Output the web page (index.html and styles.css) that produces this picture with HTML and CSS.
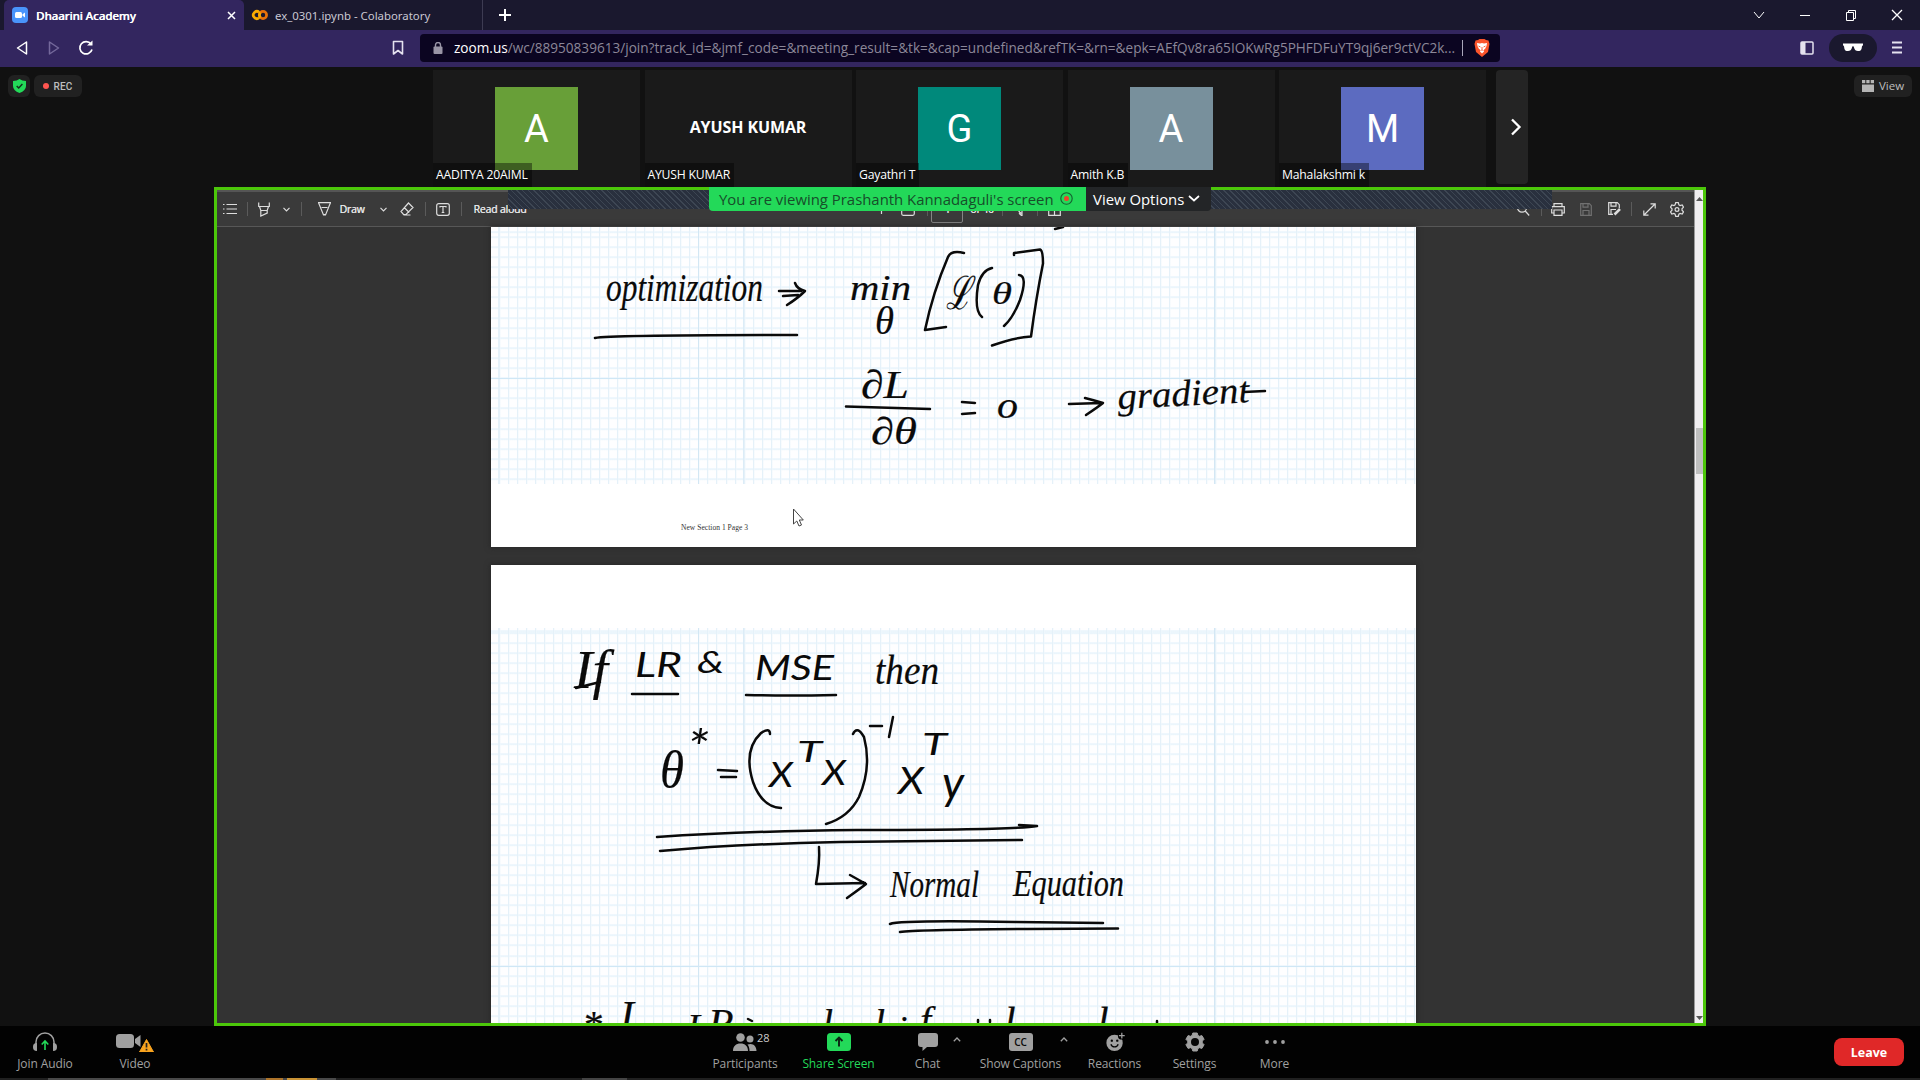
FILE: index.html
```html
<!DOCTYPE html>
<html lang="en">
<head>
<meta charset="utf-8">
<title>Dhaarini Academy</title>
<link rel="stylesheet" href="styles.css">
</head>
<body>
<div class="window">
  <header class="tabs">
    <div class="tab tab-active">
      <svg width="16" height="16" viewBox="0 0 16 16"><rect width="16" height="16" rx="4" fill="#4a94fb"/><rect x="3" y="5" width="7" height="6" rx="1.500" fill="#fff"/><path d="M10.500 7.300 13 5.400v5.200l-2.500-1.900z" fill="#fff"/></svg>
      <span class="tab-title">Dhaarini Academy</span>
      <svg width="9" height="9" viewBox="0 0 9 9"><path d="M1 1l7 7M8 1L1 8" stroke="#fff" stroke-width="1.500"/></svg>
    </div>
    <div class="tab tab-idle">
      <svg width="17" height="12" viewBox="0 0 17 12" fill="none" stroke-width="2.700"><path d="M8.200 3.200A3.600 3.600 0 1 0 8.200 8.800" stroke="#f9ab00"/><circle cx="12" cy="6" r="3.600" stroke="#e8710a"/><path d="M9.500 8.600A3.600 3.600 0 0 1 9.500 3.400" stroke="#f9ab00"/></svg>
      <span class="tab-title">ex_0301.ipynb - Colaboratory</span>
    </div>
    <svg class="new-tab" width="12" height="12" viewBox="0 0 12 12"><path d="M6 0v12M0 6h12" stroke="#fff" stroke-width="2"/></svg>
    <div class="win-buttons">
      <svg width="12" height="12" viewBox="0 0 12 12"><path d="M1 3l5 6 5-6"/></svg>
      <svg width="12" height="12" viewBox="0 0 12 12"><path d="M1 6.500h10"/></svg>
      <svg width="12" height="12" viewBox="0 0 12 12"><path d="M1.500 3.500h7v8h-7zM3.500 3.500v-2h7v8h-2"/></svg>
      <svg width="12" height="12" viewBox="0 0 12 12"><path d="M1 1l10 10M11 1L1 11" stroke-width="1.300"/></svg>
    </div>
  </header>

  <nav class="toolbar">
    <svg width="12" height="16" viewBox="0 0 12 16"><path d="M10.500 2v12L1.500 8z" fill="none" stroke="#fff" stroke-width="1.500" stroke-linejoin="round"/></svg>
    <svg width="12" height="16" viewBox="0 0 12 16"><path d="M1.500 2v12l9-6z" fill="none" stroke="#74689b" stroke-width="1.500" stroke-linejoin="round"/></svg>
    <svg width="16" height="16" viewBox="0 0 16 16"><path d="M13 4A6.200 6.200 0 1 0 14 9.500" fill="none" stroke="#fff" stroke-width="1.700"/><path d="M9 5.500h5.500V.500z" fill="#fff"/></svg>
    <svg width="12" height="16" viewBox="0 0 12 16"><path d="M1.500 1.500h9v12.500L6 10.500 1.500 14z" fill="none" stroke="#e5e2ef" stroke-width="1.600" stroke-linejoin="round"/></svg>
    <div class="address">
      <svg width="10" height="12" viewBox="0 0 10 12"><rect x=".500" y="4.500" width="9" height="7.500" rx="1" fill="#9995a6"/><path d="M2.500 5V3a2.500 2.500 0 0 1 5 0v2" fill="none" stroke="#9995a6" stroke-width="1.400"/></svg>
      <span class="url"><b>zoom.us</b>/wc/88950839613/join?track_id=&amp;jmf_code=&amp;meeting_result=&amp;tk=&amp;cap=undefined&amp;refTK=&amp;rn=&amp;epk=AEfQv8ra65IOKwRg5PHFDFuYT9qj6er9ctVC2k...</span>
      <i class="address-rule"></i>
      <svg width="16" height="18" viewBox="0 0 16 18"><path d="M4 1l1.500-1h5L12 1l2.500.500L15.500 5l-1.500 8-6 5-6-5L.500 5l1-3.500z" fill="#fb542b"/><path d="M3 4l3 .500L8 4l2 .500L13 4l-.500 3-1.500 3-1 .500 0 2L8 14.500l-2-2 0-2L5 10 3.500 7z" fill="#fff"/><path d="M4.500 7l2 1M11.500 7l-2 1M8 8v2.500M6.500 11.500L8 10.800l1.500.700" stroke="#fb542b" stroke-width=".900" fill="none"/></svg>
    </div>
    <div class="tools">
      <svg width="14" height="14" viewBox="0 0 14 14"><rect x="1" y="1" width="12" height="12" rx="1" fill="none" stroke="#e5e2ef" stroke-width="1.500"/><path d="M1 1h4.500v12H1z" fill="#e5e2ef"/></svg>
      <span class="private"><svg width="20" height="9" viewBox="0 0 20 9"><path d="M0 .500h20v2c-.800 0-1 .500-1.200 2C18.500 7.500 17 8 15 8s-3.500-1-4-3.500c-.300-1-.500-1.200-1-1.200s-.700.200-1 1.200C8.500 7 7 8 5 8S1.500 7.500 1.200 4.500C1 3 .800 2.500 0 2.500z" fill="#fff"/></svg></span>
      <svg width="10" height="13" viewBox="0 0 10 13"><path d="M0 1.500h10M0 6.500h10M0 11.500h10" stroke="#e5e2ef" stroke-width="1.800"/></svg>
    </div>
  </nav>

  <main class="meeting">
    <div class="status">
      <span class="chip chip-shield"><svg width="13" height="14" viewBox="0 0 13 14"><path d="M6.500 0Q9 2 13 2v5q0 4.500-6.500 7Q0 11.500 0 7V2q4 0 6.500-2z" fill="#23d959"/><path d="M3.700 7l2 2 3.700-4" fill="none" stroke="#152a1b" stroke-width="1.400"/></svg></span>
      <span class="chip chip-rec"><i class="rec-dot"></i>REC</span>
    </div>
    <section class="gallery">
      <article class="tile"><div class="avatar avatar-lime">A</div><span class="name">AADITYA 20AIML</span></article>
      <article class="tile"><strong class="big-name">AYUSH KUMAR</strong><span class="name">AYUSH KUMAR</span></article>
      <article class="tile"><div class="avatar avatar-teal">G</div><span class="name">Gayathri T</span></article>
      <article class="tile"><div class="avatar avatar-slate">A</div><span class="name">Amith K.B</span></article>
      <article class="tile"><div class="avatar avatar-indigo">M</div><span class="name">Mahalakshmi k</span></article>
      <div class="next"><svg width="12" height="18" viewBox="0 0 12 18"><path d="M2 1.500l7.500 7.500L2 16.500" fill="none" stroke="#fff" stroke-width="2.300"/></svg></div>
    </section>
    <div class="view-wrap"><span class="chip chip-view"><svg width="12" height="12" viewBox="0 0 12 12" fill="#b5b5b5"><path d="M0 4.500h12V12H0zM0 0h3.300v3.300H0zM4.300 0h3.300v3.300H4.300zM8.700 0H12v3.300H8.700z"/></svg>View</span></div>
  </main>

  <section class="share">
    <div class="viewer">
      <div class="pdf-bar">
        <svg width="14" height="12" viewBox="0 0 14 12"><path d="M3.500 1.500H14M3.500 6H14M3.500 10.500H14M0 1.500h1.500M0 6h1.500M0 10.500h1.500"/></svg>
        <i class="rule"></i>
        <svg width="12" height="15" viewBox="0 0 12 15"><path d="M.700.500v4h10.600v-4M1.500 4.500l1.300 4h6.400l1.300-4M2.800 8.500V14l6.400-3V8.500"/></svg>
        <svg width="7" height="5" viewBox="0 0 7 5"><path d="M.500.800l3 3 3-3"/></svg>
        <i class="rule"></i>
        <svg width="13" height="14" viewBox="0 0 13 14"><path d="M.500.700h12L7.500 13h-2zM3.500 5.500h6M5.200 12.500h2.600"/></svg>
        <span>Draw</span>
        <svg width="7" height="5" viewBox="0 0 7 5"><path d="M.500.800l3 3 3-3"/></svg>
        <svg width="14" height="14" viewBox="0 0 14 14"><path d="M8.500 1L13 5.500 6 12.500H3.500L1 9.500zM4.200 5.500l5 5M3.500 13h7"/></svg>
        <i class="rule"></i>
        <svg width="14" height="13" viewBox="0 0 14 13"><rect x=".700" y=".700" width="12.600" height="11.600" rx="2"/><path d="M4 4.500v-1h6v1M7 3.500v6M5.700 9.500h2.600"/></svg>
        <i class="rule"></i>
        <span>Read aloud</span>
        <i></i>
        <svg width="9" height="9" viewBox="0 0 9 9"><path d="M4.500 0v9M0 4.500h9"/></svg>
        <svg width="14" height="13" viewBox="0 0 14 13"><rect x=".700" y=".700" width="12.600" height="11.600" rx="1.500"/></svg>
        <i class="rule"></i>
        <span class="page-box">4</span>
        <span>of 40</span>
        <i class="rule"></i>
        <i></i>
        <svg width="12" height="13" viewBox="0 0 12 13"><path d="M10.500 5A4.500 4.500 0 1 0 5 10.500M5 7.500v5.500L2 10.300"/></svg>
        <i class="rule"></i>
        <svg width="13" height="13" viewBox="0 0 13 13"><path d="M.700.700h11.600v11.600H.700zM6.500.700v11.600M6.500 6h5.800"/></svg>
        <i></i>
        <svg width="14" height="14" viewBox="0 0 14 14"><circle cx="6" cy="5.500" r="4.600"/><path d="M9.200 9l4 4.500"/></svg>
        <i class="rule"></i>
        <svg width="14" height="13" viewBox="0 0 14 13"><path d="M3 3.500v-2.800h8v2.800M3 10H.700V3.700h12.600V10H11M3 7h8v5.300H3z"/></svg>
        <svg class="dim" width="12" height="13" viewBox="0 0 12 13"><path d="M.700.700h8.600l2 2v9.600H.700zM3 .700v3.500h5V.700M3 12V7.500h6V12"/></svg>
        <svg width="13" height="14" viewBox="0 0 13 14"><path d="M5 12.300H.700V.700h8.600l2 2V6M3 .700v3.500h5V.700M3 12V7.500h5"/><path d="M6.500 12.500l5.500-5.500" stroke-width="2.500"/></svg>
        <i class="rule"></i>
        <svg width="13" height="13" viewBox="0 0 13 13"><path d="M1 12L12 1M7.500.800h4.700v4.700M.800 7.500v4.700h4.700"/></svg>
        <svg width="14" height="15" viewBox="0 0 14 15"><path d="M5.700.700h2.600l.600 2.100 1.200.700 2.100-.600 1.300 2.300-1.500 1.600v1.400l1.500 1.600-1.300 2.300-2.100-.600-1.200.700-.600 2.100H5.700l-.600-2.100-1.200-.700-2.100.600L.500 9.800 2 8.200V6.800L.500 5.200l1.300-2.300 2.100.600 1.200-.700z"/><circle cx="7" cy="7.500" r="1.900"/></svg>
      </div>

      <div class="pages">
        <div class="page page-three">
          <div class="squares"></div>
          <svg class="ink" width="925" height="320" viewBox="491 227 925 320">
            <g class="pen">
              <path d="M1055 229l8-2"/>
              <path d="M595 338q15-3 202-3"/>
              <path d="M779 291h22M783 296l15-1M795 283q2 6 10 8-7 7-18 14"/>
              <path d="M964 253q-13-3-16 4-15 35-23 73l21-3"/>
              <path d="M1014 255v-2l26-3.500q3 1 3 14-7 35-12 73-17 1-39 9"/>
              <path d="M992 268q-10 2-14 17-4 26 4 32M1019 275q9 1 1 25-7 18-16 26"/>
              <path d="M846 406.500l84 2.500"/>
              <path d="M962 402l13 1M962 414l13-1"/>
              <path d="M1069 404l32-1M1085 398q8 2 18 5-5 4-17 12"/>
              <path d="M1244 392l21-1"/>
            </g>
            <g class="script">
              <text x="606" y="301" font-size="39" textLength="157" lengthAdjust="spacingAndGlyphs">optimization</text>
              <text x="850" y="300" font-size="35" textLength="61" lengthAdjust="spacingAndGlyphs">min</text>
              <text x="875" y="334" font-size="39" textLength="19" lengthAdjust="spacingAndGlyphs">θ</text>
              <text x="946" y="309" font-size="46" textLength="25" lengthAdjust="spacingAndGlyphs">ℒ</text>
              <text x="992" y="304" font-size="32" textLength="20" lengthAdjust="spacingAndGlyphs">θ</text>
              <text x="861" y="398" font-size="40" textLength="48" lengthAdjust="spacingAndGlyphs">∂L</text>
              <text x="871" y="444" font-size="38" textLength="46" lengthAdjust="spacingAndGlyphs">∂θ</text>
              <text x="997" y="418" font-size="38" textLength="21" lengthAdjust="spacingAndGlyphs">o</text>
              <text x="1118" y="409" font-size="37" textLength="132" lengthAdjust="spacingAndGlyphs" transform="rotate(-3 1118 409)">gradient</text>
            </g>
            <text class="footer" x="681" y="530" textLength="67">New Section 1 Page 3</text>
            <path class="pointer" d="M793.500 509v15l3.300-3 2.200 5 2.500-1-2.200-5h4z"/>
          </svg>
        </div>
        <div class="page page-four">
          <div class="squares"></div>
          <svg class="ink" width="925" height="458" viewBox="491 565 925 458">
            <g class="pen">
              <path d="M576 688l24-6"/>
              <path d="M632 694h46M746 695q40 1 90 0"/>
              <path d="M718 770l19 1M721 777h15"/>
              <path d="M770 734q0-7-9-1-18 17-8 49 9 25 28 26"/>
              <path d="M853 734q4-9 11 3 8 30-5 60-10 20-33 27"/>
              <path d="M870 726h12M893 717l-4 20"/>
              <path d="M657 837q90-6 200-7 160 0 180-4l-18-1"/>
              <path d="M660 851q80-7 180-9l182-2"/>
              <path d="M819 847q1 15-3 37l49-1M850 875l16 9q-5 4-19 14"/>
              <path d="M890 924q10-4 125-2l88 1M900 932q20-3 218-3.500"/>
            </g>
            <g class="script">
              <text x="574" y="688" font-size="54" textLength="34" lengthAdjust="spacingAndGlyphs">If</text>
              <text x="875" y="684" font-size="42" textLength="64" lengthAdjust="spacingAndGlyphs">then</text>
              <text x="660" y="787" font-size="52" textLength="24" lengthAdjust="spacingAndGlyphs">θ</text>
              <text x="1013" y="896" font-size="38" textLength="111" lengthAdjust="spacingAndGlyphs">Equation</text>
              <text x="890" y="897" font-size="37" textLength="89" lengthAdjust="spacingAndGlyphs">Normal</text>
            </g>
            <g class="print">
              <text x="635" y="677" font-size="34" textLength="47" lengthAdjust="spacingAndGlyphs">LR</text>
              <text x="697" y="673" font-size="31" textLength="27" lengthAdjust="spacingAndGlyphs">&amp;</text>
              <text x="755" y="680" font-size="35" textLength="79" lengthAdjust="spacingAndGlyphs">MSE</text>
              <text x="687" y="766" font-size="50" textLength="22" lengthAdjust="spacingAndGlyphs">*</text>
              <text x="769" y="787" font-size="35" textLength="24" lengthAdjust="spacingAndGlyphs">X</text>
              <text x="797" y="762" font-size="29" textLength="25" lengthAdjust="spacingAndGlyphs">T</text>
              <text x="822" y="785" font-size="35" textLength="24" lengthAdjust="spacingAndGlyphs">X</text>
              <text x="922" y="755" font-size="30" textLength="25" lengthAdjust="spacingAndGlyphs">T</text>
              <text x="898" y="794" font-size="36" textLength="26" lengthAdjust="spacingAndGlyphs">X</text>
              <text x="942" y="799" font-size="46" textLength="22" lengthAdjust="spacingAndGlyphs">y</text>
            </g>
            <g class="script">
              <text x="582" y="1038" font-size="40">*</text>
              <text x="620" y="1030" font-size="42">I</text>
              <text x="687" y="1040" font-size="38">L</text>
              <text x="708" y="1038" font-size="42">R</text>
              <text x="822" y="1037" font-size="40">l</text>
              <text x="874" y="1037" font-size="40">l</text>
              <text x="897" y="1042" font-size="38">i</text>
              <text x="920" y="1034" font-size="40">f</text>
              <text x="1004" y="1036" font-size="42">l</text>
              <text x="1097" y="1036" font-size="42">l</text>
            </g>
            <g class="pen"><path d="M748 1019l4 2M978 1020v2M990 1020v2M1157 1021v2"/></g>
          </svg>
        </div>
      </div>
    </div>
    <div class="scroll">
      <svg width="7" height="4" viewBox="0 0 7 4"><path d="M0 4l3.500-4L7 4z" fill="#555"/></svg>
      <i class="thumb"></i>
      <svg width="7" height="4" viewBox="0 0 7 4"><path d="M0 0l3.500 4L7 0z" fill="#555"/></svg>
    </div>
    <div class="hatch"></div>
    <div class="banner">
      <div class="viewing"><span>You are viewing Prashanth Kannadaguli's screen</span><svg width="13" height="13" viewBox="0 0 13 13"><circle cx="6.500" cy="6.500" r="5.700" fill="none" stroke="#14602f" stroke-width="1.100"/><circle cx="6.500" cy="6.500" r="2.500" fill="#f0422c"/></svg></div>
      <div class="options"><span>View Options</span><svg width="12" height="7" viewBox="0 0 12 7"><path d="M1 1l5 4.500L11 1" fill="none" stroke="#fff" stroke-width="1.700"/></svg></div>
    </div>
  </section>

  <footer class="controls">
    <div class="control"><svg width="26" height="20" viewBox="0 0 26 20"><path d="M4 15V10a9 9 0 0 1 18 0v5" fill="none" stroke="#a0a0a0" stroke-width="1.500"/><path d="M5 11v8c-3 0-4-1.500-4-4s1-4 4-4zM21 11v8c3 0 4-1.500 4-4s-1-4-4-4z" fill="#a0a0a0"/><path d="M13 18V9.500M9.700 12.500L13 9l3.300 3.500" fill="none" stroke="#23d959" stroke-width="1.600"/></svg>Join Audio</div>
    <div class="control"><svg width="38" height="20" viewBox="0 0 38 20"><rect x="0" y="2" width="18" height="14" rx="3.500" fill="#a0a0a0"/><path d="M19 7l5.500-4v12L19 11z" fill="#a0a0a0"/><path d="M30.500 7.500L37.500 20h-14z" fill="#f9a41f" stroke="#f9a41f" stroke-linejoin="round"/><path d="M30.500 11v4.500M30.500 16.700v1.800" stroke="#222" stroke-width="1.700"/></svg>Video</div>
    <div class="control"></div>
    <div class="control"><svg width="26" height="20" viewBox="0 0 26 20" fill="#a0a0a0"><circle cx="8.500" cy="5.500" r="4.300"/><circle cx="18" cy="7" r="3.500"/><path d="M1 19c0-5 3-7.500 7.500-7.500S16 14 16 19zM17.500 19c0-3-.700-5-2-6.500 5-2 9 1 9 6.500z"/></svg>Participants<span class="count">28</span></div>
    <div class="control control-share"><svg width="24" height="20" viewBox="0 0 24 20"><rect y="1" width="24" height="18" rx="3.500" fill="#23d959"/><path d="M12 14.500V6M8.500 9L12 5.500 15.500 9" fill="none" stroke="#0c2413" stroke-width="1.900"/></svg>Share Screen</div>
    <div class="control"><svg width="20" height="20" viewBox="0 0 20 20"><path d="M3 1h14q3 0 3 3v8q0 3-3 3H9l-4.500 4V15H3q-3 0-3-3V4q0-3 3-3z" fill="#a0a0a0"/></svg>Chat<svg class="more-caret" width="8" height="5" viewBox="0 0 8 5"><path d="M.800 4.200L4 1l3.200 3.200" fill="none" stroke="#a0a0a0" stroke-width="1.300"/></svg></div>
    <div class="control control-cc"><span class="cc">CC</span>Show Captions<svg class="more-caret" width="8" height="5" viewBox="0 0 8 5"><path d="M.800 4.200L4 1l3.200 3.200" fill="none" stroke="#a0a0a0" stroke-width="1.300"/></svg></div>
    <div class="control"><svg width="22" height="22" viewBox="0 0 22 22"><circle cx="10.500" cy="12" r="9" fill="#a0a0a0"/><path d="M6.500 13.500a4.200 4.200 0 0 0 8 0" fill="none" stroke="#050505" stroke-width="1.500"/><circle cx="7.500" cy="9.500" r="1.300"/><circle cx="13.500" cy="9.500" r="1.300"/><circle cx="18.500" cy="4" r="4.300"/><path d="M18.500.800v6.400M15.300 4h6.400" stroke="#a0a0a0" stroke-width="1.400"/></svg>Reactions</div>
    <div class="control"><svg width="20" height="20" viewBox="0 0 20 20"><path d="M7.800 1h4.400l.700 2.400 1.500.900 2.500-.700 2.200 3.700-1.800 1.800v1.800l1.800 1.800-2.200 3.700-2.500-.700-1.500.900-.700 2.400H7.800l-.700-2.400-1.500-.900-2.500.700-2.200-3.700 1.800-1.800V9.100L.900 7.300l2.200-3.700 2.500.700 1.500-.900z" fill="#a0a0a0" stroke="#a0a0a0" stroke-linejoin="round"/><circle cx="10" cy="10" r="4" fill="#050505"/></svg>Settings</div>
    <div class="control"><svg width="22" height="20" viewBox="0 0 22 20" fill="#a0a0a0"><circle cx="3" cy="10" r="1.900"/><circle cx="11" cy="10" r="1.900"/><circle cx="19" cy="10" r="1.900"/></svg>More</div>
    <button class="leave">Leave</button>
  </footer>
  <div class="taskbar"></div>
</div>
</body>
</html>
```
FILE: styles.css
```css
* { box-sizing: border-box; }
body { margin: 0; background: #111; font-family: "Open Sans", "Noto Sans", sans-serif; }
svg { display: block; flex: none; }
.window { width: 1920px; height: 1080px; overflow: hidden; display: grid; grid-template-rows: 30px 37px 120px 839px 52px 2px; }

/* Browser tabs */
.tabs { display: flex; align-items: center; background: #1a182e; color: #fff; font: 12px "Noto Sans", sans-serif; padding-left: 4px; }
.tab { display: flex; align-items: center; height: 30px; padding: 0 8px; white-space: nowrap; }
.tab-active { width: 240px; gap: 8px; background: #33265f; border-radius: 5px 5px 0 0; font-size: 11.600px; font-weight: 500; }
.tab-active .tab-title { flex: 1; letter-spacing: -.100px; text-shadow: .300px 0 #fff; }
.tab-idle { width: 239px; gap: 7px; padding-left: 7px; color: #c9c7d2; font-size: 11.400px; border-right: 1px solid #3d3b52; }
.new-tab { margin-left: 16px; }
.win-buttons { margin-left: auto; display: flex; gap: 34px; padding-right: 17px; }
.win-buttons svg { fill: none; stroke: #fff; stroke-width: 1; }

/* Navigation row */
.toolbar { display: flex; align-items: center; background: #33265f; padding: 0 0 2px 16px; }
.toolbar > svg:nth-child(2) { margin-left: 20px; }
.toolbar > svg:nth-child(3) { margin-left: 18px; }
.toolbar > svg:nth-child(4) { margin-left: 298px; }
.address { display: flex; align-items: center; width: 1080px; height: 28px; margin-left: 16px; padding: 0 10px 0 13px; background: #0b0521; border-radius: 4px; color: #8b8798; font-size: 13.600px; white-space: nowrap; }
.url { flex: none; width: 1003px; margin-left: 11px; }
.url b { font-weight: 400; color: #fff; }
.address-rule { width: 1px; height: 16px; margin: 0 auto 0 5px; background: #aaa6bb; }
.tools { display: flex; align-items: center; gap: 15px; margin-left: auto; padding-right: 18px; }
.private { display: grid; place-items: center; width: 48px; height: 28px; border-radius: 14px; background: #1a182e; }

/* Participant strip */
.meeting { display: grid; grid-template-columns: 433px 1095px 1fr; padding-top: 3px; }
.status { display: flex; gap: 4px; padding: 5px 0 0 8px; }
.chip { display: flex; align-items: center; justify-content: center; height: 22px; border-radius: 6px; background: #212121; color: #bdbdbd; font-size: 11.500px; }
.chip-shield { width: 22px; }
.chip-rec { width: 48px; gap: 4px; font: 500 10px Roboto, sans-serif; letter-spacing: .200px; }
.rec-dot { width: 6px; height: 6px; border-radius: 3px; background: #ff5550; }
.gallery { display: flex; gap: 4.500px; }
.tile { display: grid; grid-template: 1fr / 1fr; flex: none; width: 207px; height: 117px; background: #1a1a1a; color: #fff; }
.tile > * { grid-area: 1 / 1; }
.avatar { display: grid; place-items: center; justify-self: center; width: 83px; height: 83px; margin-top: 17px; font: 38px Roboto, sans-serif; }
.avatar-lime { background: #689f38; }
.avatar-teal { background: #00897b; }
.avatar-slate { background: #78909c; }
.avatar-indigo { background: #5c6bc0; }
.big-name { place-self: center; padding-bottom: 3px; font-size: 16px; font-weight: 700; letter-spacing: -.100px; }
.name { place-self: end start; height: 24px; padding: 0 4px 0 3px; background: rgba(0, 0, 0, .4); font-size: 12.200px; line-height: 23px; letter-spacing: -.200px; white-space: nowrap; }
.next { display: grid; flex: none; place-items: center; width: 32px; height: 114px; margin-left: 5.500px; padding-left: 8px; border-radius: 4px; background: #242424; }
.view-wrap { display: flex; justify-content: flex-end; padding: 5px 8px 0 0; }
.chip-view { width: 58px; gap: 5px; padding-bottom: 1px; }

/* Shared screen */
.share { position: relative; display: flex; width: 1492px; height: 839px; margin-left: 214px; border: 3px solid #4cc70a; background: #333; }
.viewer { width: 1477px; overflow: hidden; }
.pdf-bar { display: grid; grid-template-columns: 26px 8px 26px 18px 12px 34px 22px 40px 8px 28px 8px 28px 50px 346px 20px 34px 4px 35px 36px 4px 10px 18px 10px 24px 444px 26px 10px 24px 32px 24px 10px 26px 30px; justify-items: center; align-items: center; height: 37px; border-top: 2px solid #555; border-bottom: 1px solid #575757; background: #3a3a3a; color: #e6e6e6; font-size: 10.500px; white-space: nowrap; }
.pdf-bar svg { fill: none; stroke: #ddd; stroke-width: 1.200; }
.pdf-bar .dim { stroke: #707070; }
.pdf-bar span { text-shadow: .300px 0 #ddd; letter-spacing: -.200px; }
.pdf-bar .page-box { width: 32px; height: 27px; border: 1px solid #858585; border-radius: 2px; text-align: center; line-height: 25px; }
.rule { width: 1px; height: 14px; background: #5b5b5b; }
.pages { display: flex; flex-direction: column; gap: 18px; width: 925px; margin-left: 274px; }
.page { display: grid; flex: none; background: #fff; box-shadow: 0 0 5px 1px #292929; }
.page > * { grid-area: 1 / 1; }
.page-three { height: 320px; grid-template-rows: 320px; }
.page-four { height: 458px; grid-template-rows: 458px; }
.squares {
  height: 257px;
  background:
    linear-gradient(90deg, #d3e7f4 1px, transparent 1px) 207px 0 / 516px 100%,
    linear-gradient(90deg, #dcecf7 1px, transparent 1px) 252px 0 / 471px 100%,
    linear-gradient(#cfe7f6 1px, transparent 1px) 0 151px / 100% 400px,
    repeating-linear-gradient(90deg, #e5f1f9 0 1px, rgba(240, 247, 252, .5) 1px 2px, transparent 2px 9.060px) 8px 0,
    repeating-linear-gradient(#e0f0fa 0 1px, rgba(240, 248, 253, .5) 1px 2px, transparent 2px 10.080px) 0 9.500px;
  background-color: #fefeff;
}
.page-four .squares {
  height: 395px;
  margin-top: 63px;
  background:
    linear-gradient(90deg, #d3e7f4 1px, transparent 1px) 207px 0 / 516px 100%,
    linear-gradient(90deg, #dcecf7 1px, transparent 1px) 252px 0 / 471px 100%,
    linear-gradient(#cfe7f6 1px, transparent 1px) 0 338px / 100% 400px,
    repeating-linear-gradient(90deg, #e5f1f9 0 1px, rgba(240, 247, 252, .5) 1px 2px, transparent 2px 9.060px) 8px 0,
    repeating-linear-gradient(#e0f0fa 0 1px, rgba(240, 248, 253, .5) 1px 2px, transparent 2px 10.080px) 0 4.500px;
  background-color: #fefeff;
}
.pen { fill: none; stroke: #0a0a0a; stroke-width: 2.500; stroke-linecap: round; stroke-linejoin: round; }
.script { fill: #0a0a0a; stroke: #0a0a0a; stroke-width: .200; font-family: "Liberation Serif", serif; font-style: italic; }
.print { fill: #0a0a0a; font-family: Lato, sans-serif; font-style: italic; }
.footer { fill: #333; font: 7.500px "Liberation Serif", serif; }
.pointer { fill: #fff; stroke: #444; stroke-width: 1; }
.scroll { display: flex; flex-direction: column; align-items: flex-end; width: 9px; padding: 7px 0 3px; background: #f0eef0; border-left: 1px solid #999; }
.thumb { width: 7px; height: 46px; margin: 227px 0 auto; background: #bfbfbf; }
.hatch { position: absolute; left: 291px; top: 0; width: 1044px; height: 19px; background: repeating-linear-gradient(45deg, #29303e 0 3px, #3d4653 3px 4px); }
.banner { position: absolute; left: 492px; top: -3px; display: flex; height: 24px; }
.viewing, .options { display: flex; align-items: center; padding-bottom: 1px; white-space: nowrap; font-size: 14.900px; }
.viewing { width: 377px; padding-left: 10px; gap: 6px; background: #23d959; color: #174d2a; border-radius: 0 0 0 4px; }
.viewing span { width: 335px; }
.options { width: 125px; padding-left: 7px; gap: 4px; background: #232527; color: #fff; border-radius: 0 0 4px 0; }

/* Meeting controls */
.controls { display: grid; grid-template-columns: 90px 90px 520px 90px 97px 81px 105px 83px 77px 83px 1fr; background: #020202; color: #a0a0a0; font-size: 12px; }
.control { position: relative; display: flex; flex-direction: column; align-items: center; justify-content: flex-start; height: 52px; padding-top: 6px; line-height: 24px; letter-spacing: -.100px; white-space: nowrap; }
.control > svg:first-child { height: 20px; }
.control-share { color: #23d959; }
.count { position: absolute; left: 57px; top: 0; font-size: 11px; color: #ccc; }
.more-caret { position: absolute; left: 66px; top: 11px; }
.control-cc .more-caret { left: 92px; }
.cc { width: 24px; height: 18px; margin: 1px 0; border-radius: 3px; background: #a0a0a0; color: #090909; font-size: 10px; font-weight: 600; line-height: 18px; text-align: center; }
.leave { justify-self: end; align-self: start; width: 70px; height: 28px; margin: 12px 16px 0 0; padding: 0; border: 0; border-radius: 8px; background: #e02828; color: #fff; font: 700 12.500px "Open Sans", sans-serif; }
.taskbar { background: linear-gradient(90deg, transparent 266px, #ad742a 266px 283px, transparent 283px 287px, #c99335 287px 317px, transparent 317px 582px, #444 582px 627px, transparent 627px), linear-gradient(90deg, #202020 48px, #494949 48px 336px, #202020 336px); }
```
